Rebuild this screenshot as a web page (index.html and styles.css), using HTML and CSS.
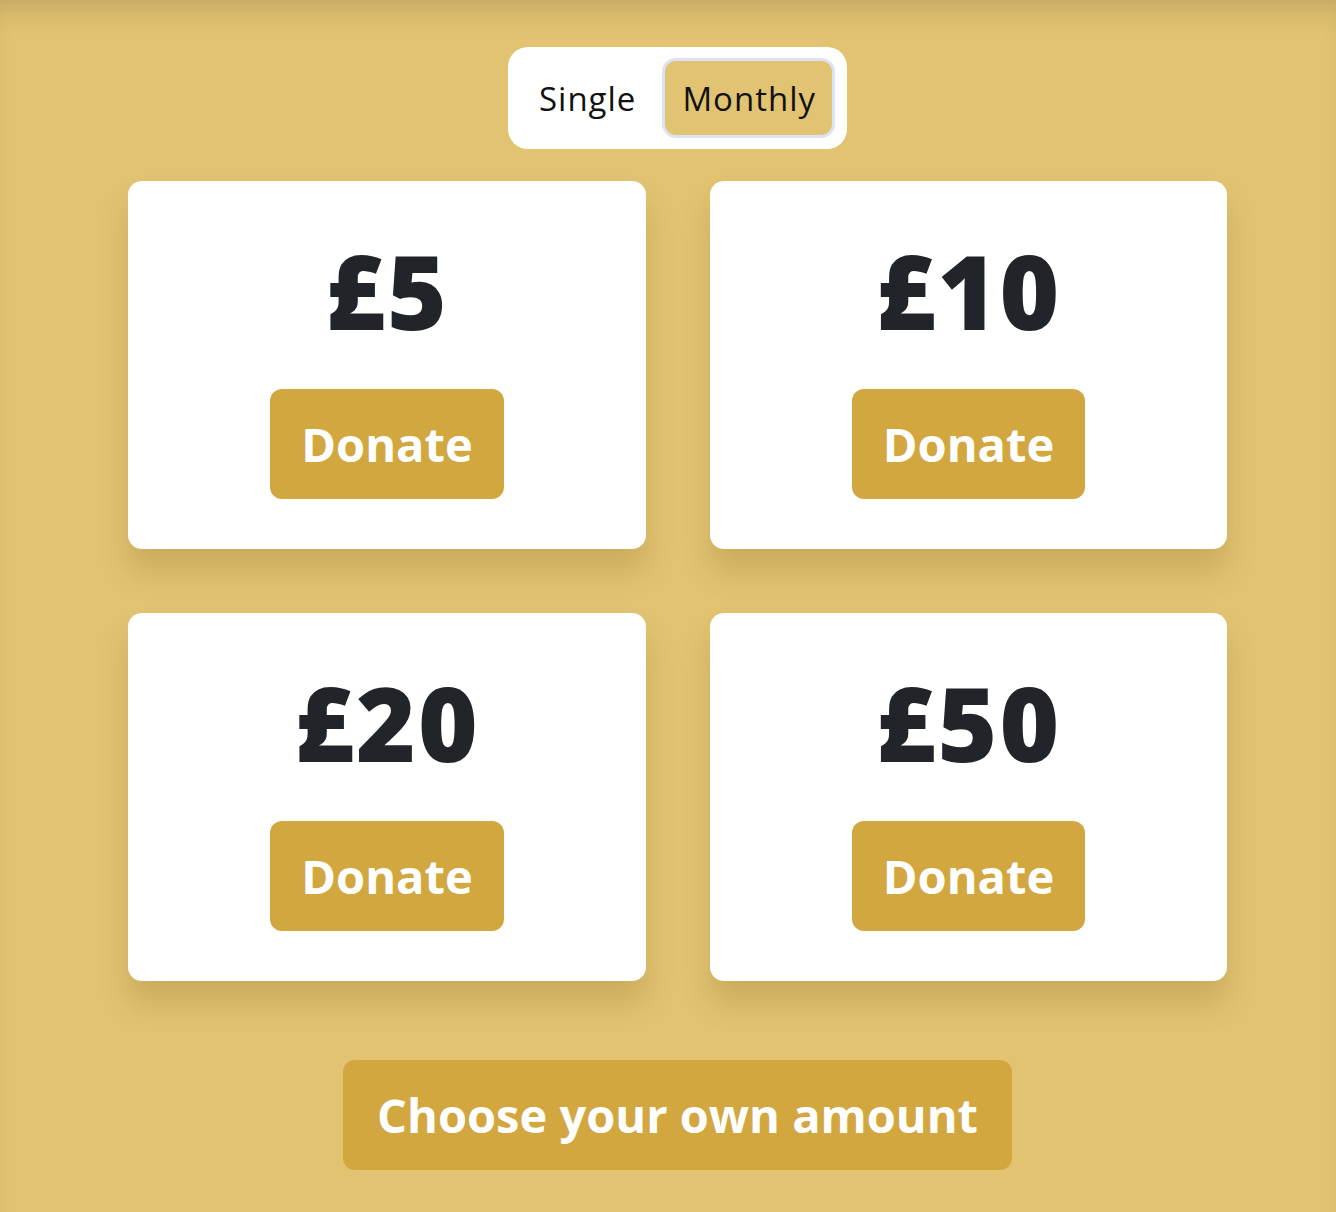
FILE: index.html
```html
<!DOCTYPE html>
<html lang="en">
<head>
<meta charset="utf-8">
<title>Donate</title>
<link rel="stylesheet" href="styles.css">
</head>
<body>
<main class="page">
  <div class="toggle">
    <button class="toggle-option">Single</button>
    <button class="toggle-option is-active">Monthly</button>
  </div>
  <section class="amounts">
    <div class="card">
      <div class="price">£5</div>
      <button class="btn">Donate</button>
    </div>
    <div class="card">
      <div class="price">£10</div>
      <button class="btn">Donate</button>
    </div>
    <div class="card">
      <div class="price">£20</div>
      <button class="btn">Donate</button>
    </div>
    <div class="card">
      <div class="price">£50</div>
      <button class="btn">Donate</button>
    </div>
  </section>
  <button class="btn btn-own">Choose your own amount</button>
</main>
</body>
</html>
```

FILE: styles.css
```css
* { box-sizing: border-box; }
html, body {
  margin: 0;
  padding: 0;
  background: #e2c372;
}
body {
  font-family: "Open Sans", "Liberation Sans", sans-serif;
  min-height: 1212px;
  box-shadow: inset 0 24px 28px -14px rgba(0, 0, 0, 0.14);
}
.page {
  display: flex;
  flex-direction: column;
  align-items: center;
  padding: 47px 0 42px 19px;
}
.toggle {
  display: flex;
  gap: 7px;
  background: #fff;
  border-radius: 20px;
  padding: 11px 12px 11px 11px;
}
.toggle-option {
  font-family: inherit;
  font-size: 33px;
  font-weight: 400;
  color: #111;
  letter-spacing: 1px;
  height: 80px;
  padding: 0 16px 0 17px;
  border: 3px solid transparent;
  border-radius: 14px;
  background: transparent;
}
.toggle-option.is-active {
  background: #e2c372;
  border-color: #dde3f6;
}
.amounts {
  display: grid;
  grid-template-columns: 518px 517px;
  gap: 64px;
  margin-top: 32px;
}
.card {
  background: #fff;
  border-radius: 14px;
  height: 368px;
  padding-top: 47px;
  display: flex;
  flex-direction: column;
  align-items: center;
  box-shadow: 0 22px 30px rgba(120, 90, 20, 0.22);
}
.price {
  font-size: 102px;
  font-weight: 800;
  line-height: 125px;
  color: #212529;
  letter-spacing: 2px;
  margin-bottom: 36px;
}
.btn {
  font-family: inherit;
  font-size: 47px;
  font-weight: 700;
  color: #fff;
  background: #d2a73f;
  border: none;
  border-radius: 12px;
  height: 110px;
  padding: 0 31px;
}
.btn-own {
  margin-top: 79px;
  padding: 0 34px;
}
```
